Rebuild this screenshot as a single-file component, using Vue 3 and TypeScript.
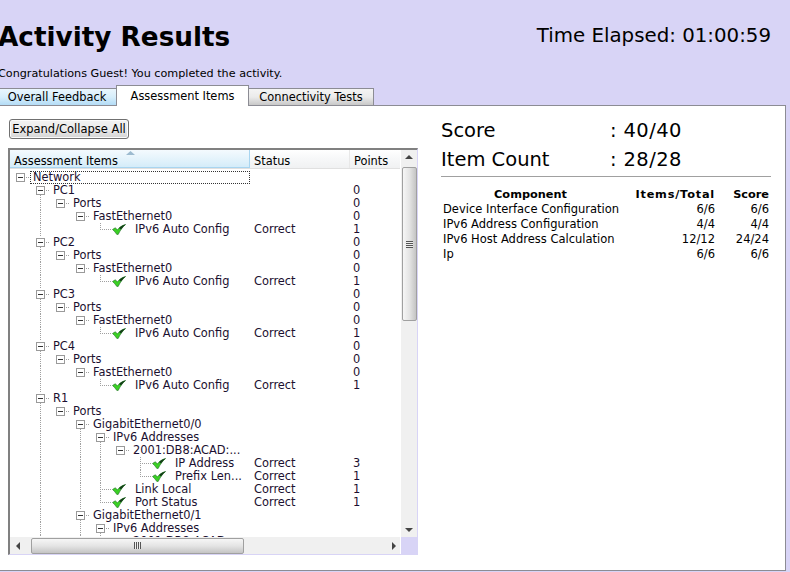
<script setup lang="ts">
interface TreeNode {
  label: string
  status?: string
  points?: number
  children?: TreeNode[]
}
interface Row {
  key: number
  label: string
  status: string
  points: string
  guides: boolean[]
  leaf: boolean
  more: boolean
  selected: boolean
}

const autoConfig = (pc: string): TreeNode => ({
  label: pc,
  points: 0,
  children: [
    {
      label: 'Ports',
      points: 0,
      children: [
        {
          label: 'FastEthernet0',
          points: 0,
          children: [{ label: 'IPv6 Auto Config', status: 'Correct', points: 1 }],
        },
      ],
    },
  ],
})

const tree: TreeNode = {
  label: 'Network',
  children: [
    autoConfig('PC1'),
    autoConfig('PC2'),
    autoConfig('PC3'),
    autoConfig('PC4'),
    {
      label: 'R1',
      children: [
        {
          label: 'Ports',
          children: [
            {
              label: 'GigabitEthernet0/0',
              children: [
                {
                  label: 'IPv6 Addresses',
                  children: [
                    {
                      label: '2001:DB8:ACAD:...',
                      children: [
                        { label: 'IP Address', status: 'Correct', points: 3 },
                        { label: 'Prefix Len...', status: 'Correct', points: 1 },
                      ],
                    },
                  ],
                },
                { label: 'Link Local', status: 'Correct', points: 1 },
                { label: 'Port Status', status: 'Correct', points: 1 },
              ],
            },
            {
              label: 'GigabitEthernet0/1',
              children: [
                {
                  label: 'IPv6 Addresses',
                  children: [{ label: '2001:DB8:ACAD:...', children: [] }],
                },
                { label: 'Link Local', status: 'Correct', points: 1 },
              ],
            },
            { label: 'GigabitEthernet0/2', children: [] },
          ],
        },
      ],
    },
    { label: 'R2', children: [] },
  ],
}

const rows: Row[] = []
function walk(node: TreeNode, guides: boolean[], more: boolean): void {
  rows.push({
    key: rows.length,
    label: node.label,
    status: node.status ?? '',
    points: node.points === undefined ? '' : String(node.points),
    guides,
    leaf: !node.children,
    more,
    selected: rows.length === 0,
  })
  const kids = node.children ?? []
  kids.forEach((kid, i) => walk(kid, [...guides, more], i < kids.length - 1))
}
walk(tree, [], false)

const components = [
  { name: 'Device Interface Configuration', items: '6/6', score: '6/6' },
  { name: 'IPv6 Address Configuration', items: '4/4', score: '4/4' },
  { name: 'IPv6 Host Address Calculation', items: '12/12', score: '24/24' },
  { name: 'Ip', items: '6/6', score: '6/6' },
]
</script>

<template>
  <div class="page">
    <header class="head">
      <div class="title-row">
        <h1>Activity Results</h1>
        <div class="time">Time Elapsed: 01:00:59</div>
      </div>
      <p class="congrats">Congratulations Guest! You completed the activity.</p>
    </header>
    <nav class="tabs">
      <div class="tab blue">Overall Feedback</div>
      <div class="tab active">Assessment Items</div>
      <div class="tab grey">Connectivity Tests</div>
    </nav>
    <main class="panel">
      <section class="left">
        <button class="expand" type="button">Expand/Collapse All</button>
        <div class="treebox">
          <div class="main-col">
            <div class="thead">
              <div class="th sorted">
                <svg class="sort" width="9" height="4" viewBox="0 0 9 4"><path d="M0 4 4.5 0 9 4z" fill="#9dbbd0" /></svg>
                Assessment Items
              </div>
              <div class="th st">Status</div>
              <div class="th pt">Points</div>
            </div>
            <div class="tbody">
              <div v-for="r in rows" :key="r.key" class="row">
                <div class="c-tree">
                  <span v-for="(g, i) in r.guides" :key="i" class="indent" :class="{ on: g }"></span>
                  <template v-if="r.leaf">
                    <span class="corner" :class="{ more: r.more }"></span>
                    <svg class="check" width="14" height="11" viewBox="0 0 14 11">
                      <path d="M0.5 5.5 3.2 3.8 5.4 5.8C7.5 3.4 10 1.4 13.6 0.5 11 2.6 8.6 5.6 6.2 10.4H4.8C3.6 8.6 2.2 7 0.5 5.5z" fill="#3bd024" stroke="#1f6a26" stroke-width="0.6" stroke-linejoin="round" />
                      <path d="M7 4C9 2.4 11 1 13.6 0.5 12 2 10.5 3.5 9 5.4z" fill="#143d18" />
                    </svg>
                    <span class="leaf-label">{{ r.label }}</span>
                  </template>
                  <template v-else>
                    <span class="toggle" :class="{ down: r.more }"><i></i></span>
                    <span class="stub"></span>
                    <span class="label" :class="{ selected: r.selected }">{{ r.label }}</span>
                  </template>
                </div>
                <div class="c-status">{{ r.status }}</div>
                <div class="c-points">{{ r.points }}</div>
              </div>
            </div>
            <div class="hbar">
              <span class="arrow-l"></span>
              <div class="hthumb"><span class="hgrip"></span></div>
              <span class="arrow-r"></span>
            </div>
          </div>
          <div class="side-col">
            <div class="vbar">
              <span class="arrow-u"></span>
              <div class="vthumb"><span class="vgrip"></span></div>
              <span class="arrow-d"></span>
            </div>
            <div class="corner-box"></div>
          </div>
        </div>
      </section>
      <section class="right">
        <div class="big"><span class="big-k">Score</span><span class="big-v">: 40/40</span></div>
        <div class="big"><span class="big-k">Item Count</span><span class="big-v">: 28/28</span></div>
        <div class="rule"></div>
        <div class="grid">
          <div class="h center">Component</div>
          <div class="h num wide">Items/Total</div>
          <div class="h num">Score</div>
          <template v-for="c in components" :key="c.name">
            <div>{{ c.name }}</div>
            <div class="num">{{ c.items }}</div>
            <div class="num">{{ c.score }}</div>
          </template>
        </div>
      </section>
    </main>
  </div>
</template>

<style>
html, body { margin: 0; background: #d8d4f6; overflow: hidden; }
</style>

<style scoped>
.page {
  width: 790px;
  height: 572px;
  overflow: hidden;
  background: #d8d4f6;
  font-family: "DejaVu Sans", Verdana, sans-serif;
  font-size: 11px;
  color: #000;
}
.head { height: 86px; margin-left: -2px; }
.title-row { display: flex; justify-content: space-between; height: 67px; padding: 0 19px 0 0; }
h1 { margin: 20px 0 0; font-size: 26.3px; line-height: 34px; font-weight: 700; }
.time { margin-top: 25px; font-size: 19.8px; line-height: 22px; }
.congrats { margin: 0; line-height: 14px; font-size: 11.2px; }
.tabs { display: flex; height: 20px; align-items: flex-end; margin-left: -1px; position: relative; z-index: 1; margin-bottom: -1px; font-size: 11.4px; }
.tab { box-sizing: border-box; border: 1px solid #8c8c94; border-bottom: 0; text-align: center; line-height: 15px; }
.blue { width: 118px; height: 18px; padding: 1px 2px 0 0; background: linear-gradient(#eaf6fd, #d7eefb 50%, #b3dcf6); border-bottom: 1px solid #8c8c94; }
.active { width: 133px; height: 21px; padding-top: 3px; background: #fff; margin-left: -1px; }
.grey { width: 125px; height: 18px; padding-top: 1px; background: linear-gradient(#f4f4f4, #ebebeb 50%, #c8c8c8); border-left: 0; border-bottom: 1px solid #8c8c94; }
.panel {
  box-sizing: border-box;
  width: 786px;
  height: 466px;
  background: #fff;
  border: 1px solid #8c8c94;
  border-left: 0;
  display: flex;
}
.left { width: 441px; padding: 13px 0 0 9px; box-sizing: border-box; }
.expand {
  display: block;
  box-sizing: border-box;
  width: 120px;
  height: 20px;
  padding: 0;
  border: 1px solid #707070;
  border-radius: 3px;
  background: linear-gradient(#f2f2f2, #ebebeb 50%, #d4d4d4);
  box-shadow: inset 0 0 0 1px #fbfbfb;
  font: 11.5px "DejaVu Sans", Verdana, sans-serif;
  color: #000;
}
.treebox {
  box-sizing: border-box;
  margin: 9px 0 0 -1px;
  width: 410px;
  height: 407px;
  display: flex;
  border-top: 2px solid #808080;
  border-left: 2px solid #808080;
  border-bottom: 1px solid #d8d4f6;
  border-right: 1px solid #d8d4f6;
}
.main-col { width: 390px; display: flex; flex-direction: column; }
.thead { display: flex; height: 18px; flex: none; background: linear-gradient(#fff, #f7f8f9 45%, #f0f1f2); border-bottom: 1px solid #e0e0e0; font-size: 11.4px; }
.th { box-sizing: border-box; padding-top: 4px; line-height: 14px; border-right: 1px solid #e8e8e8; position: relative; }
.sorted { width: 240px; padding-left: 4px; background: linear-gradient(#f4fafe, #e8f5fc 40%, #d4ecf9); border-right: 1px solid #a8d5f0; border-bottom: 1px solid #a8d5f0; }
.sort { position: absolute; left: 116px; top: 1px; }
.st { width: 100px; padding-left: 4px; }
.pt { width: 50px; padding-left: 4px; border-right: 0; }
.tbody { flex: 1; min-height: 0; overflow: hidden; padding-top: 2px; color: #1b1030; font-size: 11.4px; }
.row { display: flex; height: 13px; line-height: 13px; }
.c-tree { width: 240px; display: flex; padding-left: 6px; box-sizing: border-box; white-space: nowrap; }
.c-status { width: 100px; padding-left: 4px; box-sizing: border-box; }
.c-points { width: 50px; padding-left: 3px; box-sizing: border-box; }
.indent { flex: none; width: 20px; height: 13px; box-sizing: border-box; }
.indent.on { background: repeating-linear-gradient(#a0a0a0 0 1px, transparent 1px 2px) 4px 0 / 1px 13px no-repeat; }
.corner { flex: none; width: 16px; height: 13px; background: repeating-linear-gradient(#a0a0a0 0 1px, transparent 1px 2px) 4px 0 / 1px 7px no-repeat, repeating-linear-gradient(90deg, #a0a0a0 0 1px, transparent 1px 2px) 4px 6px / 12px 1px no-repeat; }
.corner.more { background: repeating-linear-gradient(#a0a0a0 0 1px, transparent 1px 2px) 4px 0 / 1px 13px no-repeat, repeating-linear-gradient(90deg, #a0a0a0 0 1px, transparent 1px 2px) 4px 6px / 12px 1px no-repeat; }
.check { flex: none; margin-top: 1px; }
.leaf-label { margin-left: 9px; }
.toggle { flex: none; box-sizing: border-box; width: 9px; height: 9px; margin-top: 2px; border: 1px solid #9a9a9a; position: relative; background: #fff; }
.toggle i { position: absolute; left: 1px; top: 3px; width: 5px; height: 1px; background: #333; }
.toggle.down::after { content: ""; position: absolute; left: 3px; top: 8px; width: 1px; height: 1px; background: #a0a0a0; }
.stub { flex: none; width: 3px; height: 1px; margin: 6px 0 0 1px; background: repeating-linear-gradient(90deg, #a0a0a0 0 1px, transparent 1px 2px); }
.label { margin-left: 4px; }
.label.selected { margin-left: 1px; padding: 0 0 0 3px; width: 220px; box-sizing: border-box; outline: 1px dotted #333; outline-offset: -1px; }
.hbar { flex: none; height: 17px; background: #f0f0f0; display: flex; align-items: center; }
.hthumb { box-sizing: border-box; margin-left: 11px; width: 213px; height: 16px; border: 1px solid #a0a0a0; border-radius: 2px; background: linear-gradient(#f6f6f6, #e4e4e4 50%, #c4c4c4); display: flex; align-items: center; justify-content: center; }
.hgrip { width: 7px; height: 7px; background: repeating-linear-gradient(90deg, #555 0 1px, #eee 1px 2px); }
.arrow-l { margin-left: 6px; width: 0; height: 0; border: 4px solid transparent; border-left: 0; border-right-color: #444; }
.arrow-r { margin-left: auto; margin-right: 4px; width: 0; height: 0; border: 4px solid transparent; border-right: 0; border-left-color: #444; }
.side-col { flex: none; width: 16px; display: flex; flex-direction: column; margin-left: 1px; }
.vbar { flex: 1; background: #f0f0f0; display: flex; flex-direction: column; align-items: center; }
.arrow-u { margin-top: 5px; width: 0; height: 0; border: 4px solid transparent; border-top: 0; border-bottom-color: #444; }
.arrow-d { margin-top: auto; margin-bottom: 5px; width: 0; height: 0; border: 4px solid transparent; border-bottom: 0; border-top-color: #444; }
.vthumb { box-sizing: border-box; margin-top: 8px; width: 15px; height: 154px; border: 1px solid #a0a0a0; border-radius: 2px; background: linear-gradient(90deg, #f6f6f6, #e4e4e4 50%, #c4c4c4); display: flex; align-items: center; justify-content: center; }
.vgrip { width: 7px; height: 7px; background: repeating-linear-gradient(#555 0 1px, #eee 1px 2px); }
.corner-box { flex: none; height: 17px; background: #d8d4f6; }
.right { width: 330px; padding-top: 10px; }
.big { display: flex; font-size: 19.5px; line-height: 29px; }
.big-k { width: 169px; }
.big-v { letter-spacing: 0.4px; }
.rule { height: 1px; margin-top: 2px; background: #a0a0a0; }
.grid { display: grid; grid-template-columns: 175px 97px 54px; grid-auto-rows: 15px; line-height: 15px; padding: 10px 2px 0 2px; width: 330px; box-sizing: border-box; font-size: 11.5px; white-space: nowrap; }
.h { font-weight: 700; font-size: 11.3px; }
.wide { letter-spacing: 0.8px; }
.center { text-align: center; }
.num { text-align: right; }
</style>
